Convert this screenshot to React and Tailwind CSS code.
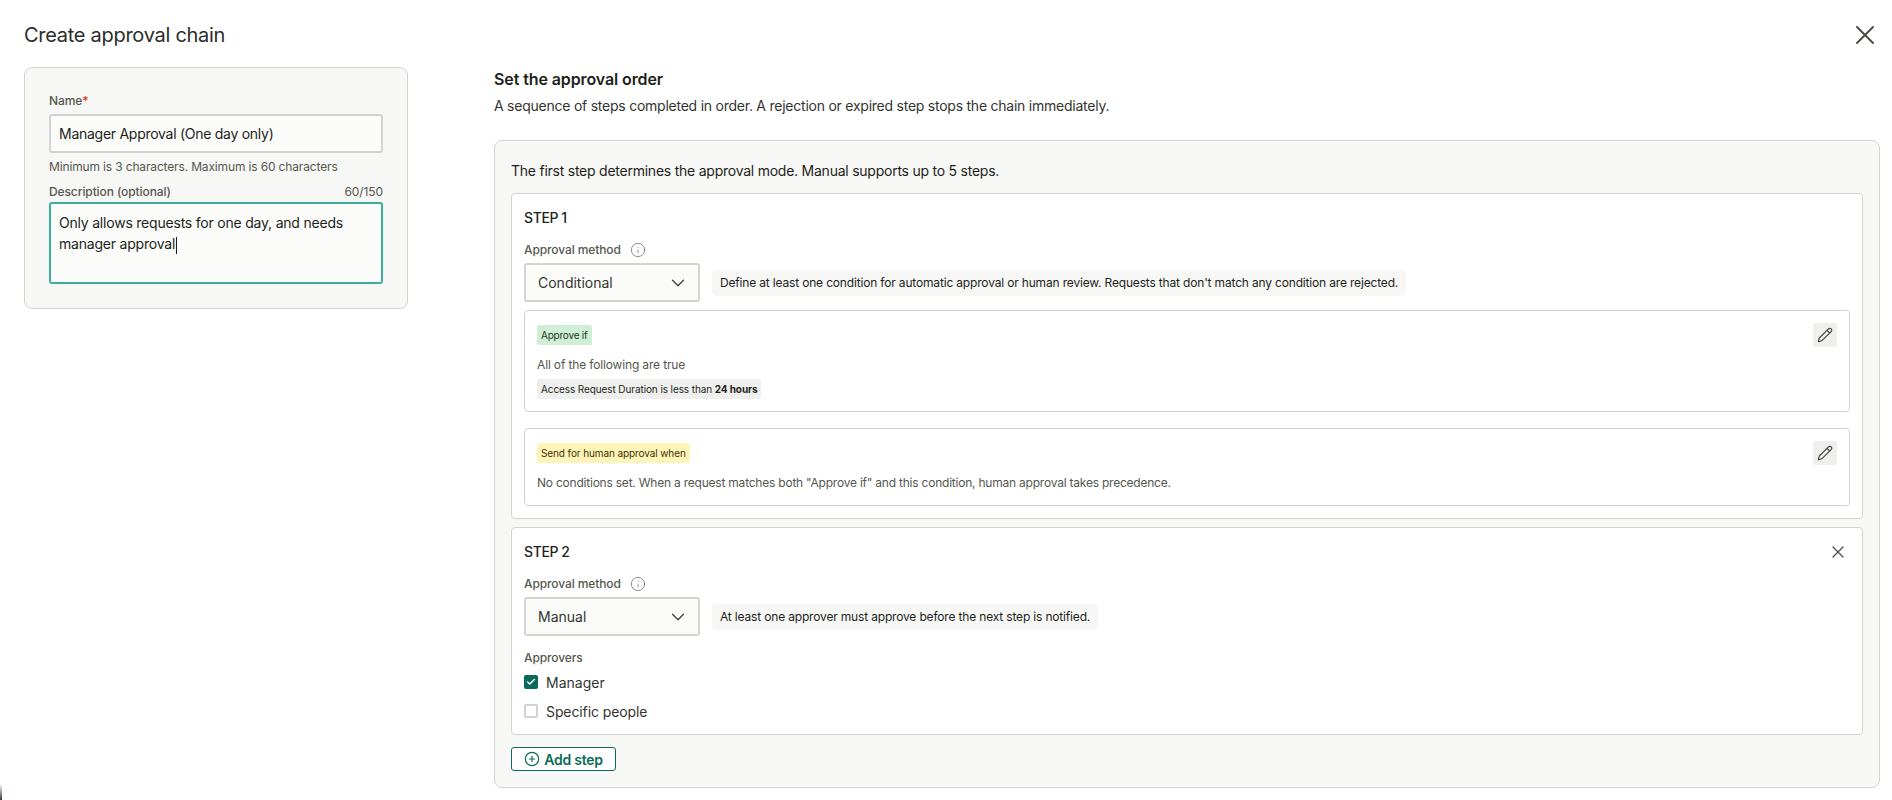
import React from 'react';
import { ChevronDown, CirclePlus, Info, Pencil, X, Check } from 'lucide-react';

const font = 'font-[Inter,"Noto_Sans",sans-serif]';

const MethodSelect = ({ value }) => (
    <div className="flex h-[39px] w-[176px] items-center justify-between rounded-[3px] border-2 border-[#d3d3d0] bg-[#fbfbf9] pl-[12px] pr-[9px] text-[14px] tracking-normal text-[#33352f]">
        <span>{value}</span>
        <ChevronDown size={22} strokeWidth={1.4} className="text-[#3c3e38]" />
    </div>
);

const MethodRow = ({ value, hint }) => (
    <>
        <div className="mt-[13px] flex h-[17px] items-center gap-[9px] text-[12px] font-medium tracking-[-0.1px] text-[#55574f]">
            Approval method
            <Info size={16} strokeWidth={1} className="text-[#55574f]" />
        </div>
        <div className="mt-[5px] flex items-center gap-[12px]">
            <MethodSelect value={value} />
            <div className="flex h-[26px] items-center rounded-[4px] bg-[#f7f7f5] px-[8px] text-[12px] tracking-[-0.17px] text-[#1d1f1a]">
                {hint}
            </div>
        </div>
    </>
);

const EditButton = () => (
    <button className="flex h-[24px] w-[24px] items-center justify-center rounded-[3px] bg-[#efefed] text-[#45473f]">
        <Pencil size={16} strokeWidth={1.75} />
    </button>
);

const ConditionBox = ({ children, className }) => (
    <div className={`relative rounded-[4px] border border-[#d3d3d0] px-[12px] pt-[14px] ${className}`}>
        <div className="absolute right-[12px] top-[12px]">
            <EditButton />
        </div>
        {children}
    </div>
);

const App = () => {
    return (
        <div className={`${font} relative h-[800px] w-full overflow-hidden bg-white tracking-[-0.22px] text-[#1d1f1a]`}>
            <div className="absolute bottom-0 left-0 h-[16px] w-[2px] bg-gradient-to-b from-transparent to-[#33403e]" />
            <div className="flex">
                <div className="w-[494px] shrink-0 pl-[24px] pt-[22px]">
                    <h1 className="h-[26px] text-[20px] leading-[26px] tracking-[-0.28px] text-[#2b2d27]">Create approval chain</h1>
                    <div className="mt-[19px] h-[242px] w-[384px] rounded-[8px] border border-[#d3d3d0] bg-[#f7f7f5] px-[24px] pt-[24px]">
                        <div className="h-[17px] text-[12px] font-medium leading-[17px] tracking-[-0.1px] text-[#55574f]">
                            Name<span className="text-[#e5341f]">*</span>
                        </div>
                        <div className="mt-[5px] flex h-[39px] items-center rounded-[3px] border-2 border-[#d3d3d0] bg-[#fbfbf9] px-[8px] text-[14px] tracking-[-0.27px] text-[#1d1f1a]">
                            Manager Approval (One day only)
                        </div>
                        <div className="mt-[5px] h-[17px] text-[12px] leading-[17px] tracking-[-0.15px] text-[#55574f]">
                            Minimum is 3 characters. Maximum is 60 characters
                        </div>
                        <div className="mt-[7px] flex h-[20px] items-center justify-between text-[12px] font-medium tracking-[-0.1px] text-[#55574f]">
                            <span>Description (optional)</span>
                            <span className="font-normal">60/150</span>
                        </div>
                        <div className="h-[82px] rounded-[3px] border-2 border-[#3fae99] bg-[#fbfbf9] px-[8px] pt-[8px] text-[14px] leading-[21px] tracking-[-0.21px] text-[#1d1f1a]">
                            Only allows requests for one day, and needs
                            <br />
                            manager approval<span className="ml-[1px] inline-block h-[17px] w-px bg-[#1d1f1a] align-middle" />
                        </div>
                    </div>
                </div>

                <div className="flex-1 pr-[12px]">
                    <div className="relative pt-[69px]">
                        <X size={32} strokeWidth={1.5} className="absolute right-[-1px] top-[19px] text-[#4a4c44]" />
                        <h2 className="h-[20px] text-[16px] font-semibold leading-[20px] tracking-[-0.1px] text-[#1d1f1a]">Set the approval order</h2>
                        <p className="mt-[7px] h-[20px] text-[14px] leading-[20px] tracking-[-0.24px] text-[#33352f]">
                            A sequence of steps completed in order. A rejection or expired step stops the chain immediately.
                        </p>
                    </div>

                    <div className="mt-[24px] h-[648px] rounded-[8px] border border-[#d3d3d0] bg-[#f7f7f5] px-[16px] pt-[20px]">
                        <p className="h-[20px] text-[14px] leading-[20px] tracking-[-0.24px] text-[#1d1f1a]">
                            The first step determines the approval mode. Manual supports up to 5 steps.
                        </p>

                        <div className="mt-[12px] h-[326px] rounded-[4px] border border-[#d3d3d0] bg-white px-[12px] pt-[14px]">
                            <div className="h-[20px] text-[14px] font-medium leading-[20px] tracking-[-0.4px]">STEP 1</div>
                            <MethodRow
                                value="Conditional"
                                hint="Define at least one condition for automatic approval or human review. Requests that don't match any condition are rejected."
                            />

                            <ConditionBox className="mt-[8px] h-[102px]">
                                <span className="flex h-[20px] w-fit items-center rounded-[2px] bg-[#cfeed4] px-[4px] text-[10px] text-[#1d3a24]">
                                    Approve if
                                </span>
                                <p className="mt-[10px] h-[20px] text-[12px] leading-[20px] tracking-[-0.15px] text-[#55574f]">All of the following are true</p>
                                <span className="mt-[4px] flex h-[20px] w-fit items-center rounded-[2px] bg-[#efefed] px-[4px] text-[10px] tracking-[-0.1px] text-[#1d1f1a]">
                                    Access Request Duration is less than&nbsp;<b className="font-bold">24 hours</b>
                                </span>
                            </ConditionBox>

                            <ConditionBox className="mt-[16px] h-[78px]">
                                <span className="flex h-[20px] w-fit items-center rounded-[2px] bg-[#fff4b8] px-[4px] text-[10px] tracking-[-0.1px] text-[#3d3208]">
                                    Send for human approval when
                                </span>
                                <p className="mt-[10px] h-[20px] text-[12px] leading-[20px] text-[#55574f]">
                                    No conditions set. When a request matches both "Approve if" and this condition, human approval takes precedence.
                                </p>
                            </ConditionBox>
                        </div>

                        <div className="relative mt-[8px] h-[208px] rounded-[4px] border border-[#d3d3d0] bg-white px-[12px] pt-[14px]">
                            <X size={20} strokeWidth={1.5} className="absolute right-[14px] top-[14px] text-[#4a4c44]" />
                            <div className="h-[20px] text-[14px] font-medium leading-[20px] tracking-[-0.4px]">STEP 2</div>
                            <MethodRow value="Manual" hint="At least one approver must approve before the next step is notified." />

                            <div className="mt-[13px] h-[17px] text-[12px] font-medium leading-[17px] tracking-[-0.1px] text-[#55574f]">Approvers</div>
                            <div className="mt-[6px] flex h-[20px] items-center gap-[8px] text-[14px] tracking-normal text-[#33352f]">
                                <span className="flex h-[14px] w-[14px] items-center justify-center rounded-[2px] bg-[#0b6b5a] text-white">
                                    <Check size={10} strokeWidth={3.5} />
                                </span>
                                Manager
                            </div>
                            <div className="mt-[9px] flex h-[20px] items-center gap-[8px] text-[14px] tracking-[-0.1px] text-[#33352f]">
                                <span className="h-[14px] w-[14px] rounded-[2px] border-2 border-[#d3d3d0] bg-white" />
                                Specific people
                            </div>
                        </div>

                        <button className="mt-[12px] flex h-[24px] w-[105px] items-center justify-center gap-[4px] rounded-[3px] border border-[#0b6b5a] bg-white text-[14px] font-semibold text-[#0b6b5a]">
                            <CirclePlus size={16} strokeWidth={1.75} />
                            Add step
                        </button>
                    </div>
                </div>
            </div>
        </div>
    );
};

export default App;
